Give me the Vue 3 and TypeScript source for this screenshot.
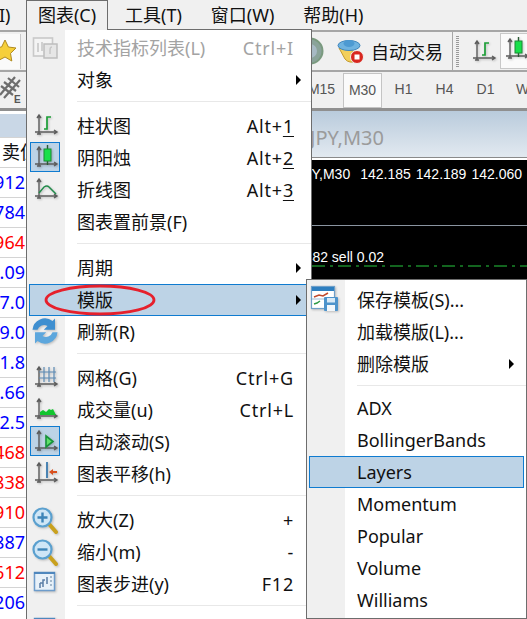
<script setup lang="ts">
interface MenuRow {
  label?: string
  key?: string
  under?: string
  icon?: string
  arrow?: boolean
  disabled?: boolean
  selected?: boolean
  active?: boolean
  sep?: boolean
}

const quotes = [
  { t: '1.912', c: 'b' }, { t: '1.784', c: 'b' }, { t: '1.964', c: 'r' }, { t: '1.09', c: 'b' },
  { t: '17.0', c: 'b' }, { t: '19.0', c: 'b' }, { t: '11.8', c: 'b' }, { t: '1.66', c: 'b' },
  { t: '12.5', c: 'b' }, { t: '1.468', c: 'r' }, { t: '1.838', c: 'r' }, { t: '1.910', c: 'r' },
  { t: '1.887', c: 'b' }, { t: '1.612', c: 'r' }, { t: '1.206', c: 'b' }
]

const mainMenu: MenuRow[] = [
  { label: '技术指标列表(L)', key: 'Ctrl+I', icon: 'ind', disabled: true },
  { label: '对象', arrow: true },
  { sep: true },
  { label: '柱状图', key: 'Alt+', under: '1', icon: 'bar' },
  { label: '阴阳烛', key: 'Alt+', under: '2', icon: 'candle', active: true },
  { label: '折线图', key: 'Alt+', under: '3', icon: 'line' },
  { label: '图表置前景(F)' },
  { sep: true },
  { label: '周期', arrow: true },
  { label: '模版', arrow: true, selected: true },
  { label: '刷新(R)', icon: 'refresh' },
  { sep: true },
  { label: '网格(G)', key: 'Ctrl+G', icon: 'grid' },
  { label: '成交量(u)', key: 'Ctrl+L', icon: 'vol' },
  { label: '自动滚动(S)', icon: 'auto', active: true },
  { label: '图表平移(h)', icon: 'shift' },
  { sep: true },
  { label: '放大(Z)', key: '+', icon: 'zin' },
  { label: '缩小(m)', key: '-', icon: 'zout' },
  { label: '图表步进(y)', key: 'F12', icon: 'step' },
  { sep: true },
  { label: '属性(P)...', key: 'F8', icon: 'step' }
]

const subMenu: MenuRow[] = [
  { label: '保存模板(S)...', icon: 'save' },
  { label: '加载模版(L)...' },
  { label: '删除模版', arrow: true },
  { sep: true },
  { label: 'ADX' },
  { label: 'BollingerBands' },
  { label: 'Layers', selected: true },
  { label: 'Momentum' },
  { label: 'Popular' },
  { label: 'Volume' },
  { label: 'Williams' }
]

const frames = ['M15', 'M30', 'H1', 'H4', 'D1', 'W1']
</script>

<template>
  <div class="app">
    <svg class="defs" width="0" height="0" aria-hidden="true">
      <defs>
        <g id="axes" fill="none" stroke="#5c5c5c" stroke-width="1.4">
          <path d="M9 6v18M5 22h21M7 8l2-3 2 3M7 24h4M24 20l3 2-3 2" />
        </g>
        <symbol id="i-bar" viewBox="0 0 30 30">
          <use href="#axes" />
          <path d="M14 19h3V7h4" fill="none" stroke="#1b9e36" stroke-width="1.700" />
        </symbol>
        <symbol id="i-candle" viewBox="0 0 30 30">
          <use href="#axes" />
          <path d="M17.500 3v20" stroke="#2b5a35" stroke-width="1.400" />
          <rect x="14" y="7" width="7" height="12" fill="#18e04a" stroke="#1a8a35" />
        </symbol>
        <symbol id="i-line" viewBox="0 0 30 30">
          <use href="#axes" />
          <path d="M9 19l5-6q3-2 5 0l7 7" fill="none" stroke="#218a4a" stroke-width="1.500" />
        </symbol>
        <symbol id="i-grid" viewBox="0 0 30 30">
          <use href="#axes" />
          <path d="M14 5v15M19 5v15M24 5v15M9 10h17M9 16h17" fill="none" stroke="#5c8ab4" stroke-width="1.200" />
        </symbol>
        <symbol id="i-vol" viewBox="0 0 30 30">
          <use href="#axes" />
          <path d="M10 21v-3l3-2 3 2 3-3 2 1 2-1 3 6z" fill="#12c52e" />
        </symbol>
        <symbol id="i-auto" viewBox="0 0 30 30">
          <use href="#axes" />
          <path d="M16 10l7 5.500-7 5.500z" fill="#5fe06a" stroke="#17933a" stroke-width="1.600" />
        </symbol>
        <symbol id="i-shift" viewBox="0 0 30 30">
          <use href="#axes" />
          <path d="M17 4v16" stroke="#3979ad" stroke-width="1.800" />
          <path d="M19 14l4-3v2h4v2h-4v2z" fill="#d9501e" />
        </symbol>
        <symbol id="i-zin" viewBox="0 0 30 30">
          <path d="M19 20l7 8" stroke="#c9a11e" stroke-width="4" stroke-linecap="round" />
          <circle cx="12.500" cy="13.500" r="9" fill="#cfe6f6" stroke="#5aa0cf" stroke-width="2.200" />
          <path d="M7.500 13.500h10M12.500 8.500v10" stroke="#3d84b8" stroke-width="2.400" />
        </symbol>
        <symbol id="i-zout" viewBox="0 0 30 30">
          <path d="M19 20l7 8" stroke="#c9a11e" stroke-width="4" stroke-linecap="round" />
          <circle cx="12.500" cy="13.500" r="9" fill="#cfe6f6" stroke="#5aa0cf" stroke-width="2.200" />
          <path d="M7.500 13.500h10" stroke="#3d84b8" stroke-width="2.400" />
        </symbol>
        <symbol id="i-step" viewBox="0 0 30 30">
          <rect x="4.500" y="4.500" width="20" height="18" fill="#e8f1f9" stroke="#6d9ccb" stroke-width="1.500" />
          <path d="M4 5h21" stroke="#4f87bd" stroke-width="2" />
          <path d="M10 20v-5M10 15h3M13 19v-7h2M17 16V9" fill="none" stroke="#5a7ea6" stroke-width="1.500" />
          <path d="M21 8v12" stroke="#8fa6bc" stroke-width="1.500" stroke-dasharray="2 2" />
        </symbol>
        <symbol id="i-refresh" viewBox="3 3 24 24">
          <path d="M5 14a10 10 0 0 1 16-7l2-2v9h-9l3-3a5.500 5.500 0 0 0-8 3z" fill="#3f8fd0" />
          <path d="M25 16a10 10 0 0 1-16 7l-2 2v-9h9l-3 3a5.500 5.500 0 0 0 8-3z" fill="#5da7dd" />
        </symbol>
        <symbol id="i-ind" viewBox="0 0 30 30">
          <rect x="3.500" y="6" width="19" height="18" fill="#f4f4f4" stroke="#c9c9c9" stroke-width="1.600" />
          <path d="M8 11v9M12 10v9" stroke="#c4c4c4" stroke-width="1.500" />
          <rect x="14" y="12" width="13" height="14" fill="#e6e6e6" stroke="#bdbdbd" stroke-width="1.500" />
          <path d="M22 15q-2 0-2 3v4" fill="none" stroke="#c8c8c8" stroke-width="1.500" />
        </symbol>
        <symbol id="i-save" viewBox="0 0 30 30">
          <rect x="1.500" y="2.500" width="23" height="22" fill="#fff" stroke="#6e9fc9" stroke-width="1.200" />
          <path d="M2 3h22v4H2z" fill="#2e7fc0" />
          <path d="M4 13l5-2 4 1 5-3" fill="none" stroke="#c0492d" stroke-width="1.500" />
          <path d="M4 20l3-1 3-2" fill="none" stroke="#2d9a45" stroke-width="1.500" />
          <path d="M2 15h12" stroke="#9ebcd6" />
          <rect x="14" y="13" width="14" height="14" rx="1" fill="#4d93cb" />
          <rect x="17" y="14" width="8" height="4.500" fill="#d8e9f6" />
          <rect x="17" y="21" width="8" height="6" fill="#f2f7fb" />
        </symbol>
      </defs>
    </svg>

    <div class="menubar">
      <span class="mb-clip">I)</span>
      <span class="mb-open">图表(C)</span>
      <span>工具(T)</span>
      <span class="mb-gap">窗口(W)</span>
      <span class="mb-gap">帮助(H)</span>
    </div>

    <div class="tools one">
      <div class="star-box">
        <svg class="star" viewBox="0 0 24 24">
          <path d="M12 1l3.400 7 7.600 1-5.500 5.400 1.300 7.600L12 18l-6.800 3.600 1.300-7.600L1 9l7.600-1z" fill="#f6cf3a" stroke="#b08a1e" stroke-width="1" />
        </svg>
      </div>
      <svg class="globe" viewBox="0 0 28 28">
        <circle cx="14" cy="14" r="12.500" fill="#8aa39a" stroke="#7a9a7f" stroke-width="2" />
        <circle cx="14" cy="14" r="7" fill="#a7b9c4" />
      </svg>
      <svg class="hat" viewBox="0 0 28 28">
        <path d="M2 11l19 4-1 9q-8 3-12-2z" fill="#f2cf5b" stroke="#c49a2c" />
        <ellipse cx="12" cy="8.500" rx="11" ry="5" fill="#6fb3e0" stroke="#3f86bd" />
        <ellipse cx="12" cy="6.500" rx="5.500" ry="3.500" fill="#4d9ad2" />
        <circle cx="20" cy="20" r="6.500" fill="#d8271f" stroke="#f0f0f0" />
        <rect x="17.500" y="17.500" width="5" height="5" fill="#fff" />
      </svg>
      <span class="auto">自动交易</span>
      <i class="vsep"></i>
      <i class="grip"></i>
      <svg class="tool-ic"><use href="#i-bar" /></svg>
      <div class="press"><svg class="tool-ic flush"><use href="#i-candle" /></svg></div>
    </div>

    <div class="tools two">
      <svg class="hatch" viewBox="0 0 21 28">
        <path d="M0 19L15 1M4 22L20 4M1 10l12 9M4 6l12 9M8 2l11 9" fill="none" stroke="#6e6e6e" stroke-width="2.200" />
        <text x="14" y="27" class="e">E</text>
      </svg>
      <div class="frames">
        <span v-for="f in frames" :key="f" class="frame" :class="{ on: f === 'M30', d1: f === 'D1' }">{{ f }}</span>
      </div>
    </div>

    <div class="main">
      <div class="list">
        <div class="list-head"></div>
        <div class="list-row title"><span>卖位价</span></div>
        <div v-for="q in quotes" :key="q.t" class="list-row" :class="q.c"><span class="num">{{ q.t }}</span></div>
      </div>
      <div class="chart">
        <div class="chart-title">USDJPY,M30</div>
        <div class="chart-body">
          <div class="ohlc">
            <span class="pair">USDJPY,M30</span>
            <span>142.185</span><span>142.189</span><span>142.060</span>
          </div>
          <div class="hline"></div>
          <div class="order">#40482 sell 0.02</div>
          <svg class="dash" height="2" width="100%"><line x1="0" y1="1" x2="100%" y2="1" stroke="#27c93f" stroke-dasharray="13 5 3 5" /></svg>
        </div>
      </div>
    </div>

    <div class="menu primary">
      <template v-for="(r, i) in mainMenu" :key="i">
        <div v-if="r.sep" class="sep"></div>
        <div v-else class="row" :class="{ dis: r.disabled, sel: r.selected }">
          <div class="ic" :class="{ active: r.active }">
            <svg v-if="r.icon" class="glyph" :class="{ faded: r.disabled }"><use :href="'#i-' + r.icon" /></svg>
          </div>
          <span class="lb">{{ r.label }}</span>
          <span class="key">{{ r.key }}<u v-if="r.under">{{ r.under }}</u></span>
          <span class="arrow-cell"><i v-if="r.arrow" class="arrow"></i></span>
        </div>
      </template>
      <svg class="ring" viewBox="0 0 112 32">
        <ellipse cx="56" cy="16" rx="54" ry="14" fill="none" stroke="#e6202c" stroke-width="2.800" />
      </svg>
    </div>

    <div class="menu sub">
      <template v-for="(r, i) in subMenu" :key="i">
        <div v-if="r.sep" class="sep short"></div>
        <div v-else class="row" :class="{ sel: r.selected }">
          <div class="ic">
            <svg v-if="r.icon" class="glyph"><use :href="'#i-' + r.icon" /></svg>
          </div>
          <span class="lb">{{ r.label }}</span>
          <span class="key"></span>
          <span class="arrow-cell"><i v-if="r.arrow" class="arrow"></i></span>
        </div>
      </template>
    </div>
  </div>
</template>

<style scoped>
.app {
  position: relative;
  width: 527px;
  height: 619px;
  overflow: hidden;
  background: #f0f0f0;
  color: #111;
  font-family: "Noto Sans", "Noto Sans CJK SC", sans-serif;
  font-size: 18px;
}
.defs { position: absolute; }
.menubar {
  display: flex;
  align-items: center;
  height: 30px;
  line-height: 28px;
  white-space: nowrap;
}
.menubar > span { flex: none; }
.mb-clip { width: 8px; margin-left: -1px; margin-right: 19px; }
.mb-open {
  position: relative;
  z-index: 3;
  box-sizing: border-box;
  align-self: flex-start;
  height: 30px;
  width: 82px;
  margin-right: 17px;
  text-align: center;
  background: #f0f0f0;
  border: 1px solid #6d6d6d;
  border-bottom: 0;
}
.mb-gap { margin-left: 29px; }
.tools {
  display: flex;
  align-items: center;
  height: 40px;
  box-sizing: border-box;
  border-top: 2px solid #a6a6a6;
  overflow: hidden;
}
.star-box {
  flex: none;
  box-sizing: border-box;
  width: 21px;
  height: 35px;
  display: flex;
  align-items: center;
  justify-content: flex-end;
  overflow: hidden;
  background: #fafafa;
  border-right: 1px solid #c8c8c8;
}
.star { flex: none; width: 24px; height: 24px; margin-right: 3px; }
.globe { flex: none; width: 28px; height: 28px; margin-left: 275px; }
.hat { flex: none; width: 28px; height: 28px; margin-left: 13px; }
.auto { flex: none; margin-left: 6px; white-space: nowrap; }
.vsep { flex: none; width: 1px; height: 38px; margin-left: 9px; background: #a6a6a6; }
.grip {
  flex: none;
  width: 3px;
  height: 32px;
  margin-left: 3px;
  background: repeating-linear-gradient(0deg, #9a9a9a 0 1px, #f0f0f0 1px 2px);
}
.tool-ic { flex: none; width: 30px; height: 30px; margin-left: 9px; filter: drop-shadow(1px 1px 1px rgba(0, 0, 0, .2)); }
.tool-ic.flush { margin-left: 0; }
.press {
  flex: none;
  box-sizing: border-box;
  width: 40px;
  height: 36px;
  margin-left: 2px;
  background: #fafafa;
  border: 1px solid #c8c8c8;
}
.two { height: 41px; border-bottom: 3px solid #8f8f8f; }
.hatch { flex: none; width: 21px; height: 28px; }
.e { font: bold 10px "Liberation Sans", sans-serif; fill: #555; }
.frames { display: flex; margin-left: 281px; flex: none; }
.frame {
  box-sizing: border-box;
  width: 39px;
  height: 35px;
  margin-right: 2px;
  text-align: center;
  line-height: 33px;
  font: 14px/33px "Liberation Sans", sans-serif;
  color: #555;
  flex: none;
}
.frame.on { background: #fafafa; border: 1px solid #c4c4c4; }
.frame.d1 { margin-left: 0; }
.main { display: flex; height: 508px; }
.list { flex: none; width: 26px; background: #fff; overflow: hidden; }
.list-head { height: 23px; margin-top: 3px; background: #c9d7e6; }
.list-row {
  box-sizing: border-box;
  display: flex;
  justify-content: flex-end;
  height: 30px;
  line-height: 28px;
  white-space: nowrap;
  border-top: 1px solid #d4d4d4;
  font-size: 18px;
}
.list-row.title { justify-content: flex-start; padding-left: 2px; }
.list-row.b { color: #0000ff; }
.list-row.r { color: #ff0000; }
.list-row .num { flex: none; margin-right: 1px; }
.chart { flex: 1; min-width: 0; }
.chart-title {
  box-sizing: border-box;
  height: 47px;
  padding: 6px 143px 0 0;
  text-align: right;
  font-size: 20px;
  line-height: 42px;
  color: #9b9b9b;
  background: linear-gradient(#b9cbdc, #e2e9f0);
  border-bottom: 1px solid #8a8a8a;
}
.chart-body {
  height: 125px;
  background: #000;
  color: #fff;
  border-top: 2px solid #fff;
  font: 14px/18px "Liberation Sans", sans-serif;
}
.ohlc { display: flex; justify-content: flex-end; gap: 5px; padding: 5px 5px 0 0; }
.pair { margin-right: 5px; }
.hline { height: 1px; margin-top: 42px; background: #8a94a0; }
.order { margin-top: 22px; padding-right: 143px; text-align: right; }
.dash { display: block; margin-top: -1px; }
.menu {
  position: absolute;
  box-sizing: border-box;
  border: 1px solid #6d6d6d;
  padding-bottom: 1px;
  z-index: 2;
  background: linear-gradient(90deg, #f0f0f0 38px, #fff 38px);
}
.primary { left: 26px; top: 29px; width: 286px; height: 600px; padding-top: 2px; }
.sub { left: 306px; top: 279px; width: 221px; height: 340px; padding-top: 4px; z-index: 4; }
.row {
  position: relative;
  box-sizing: border-box;
  display: grid;
  grid-template-columns: 48px 1fr auto 17px;
  height: 32px;
  margin: 0 0 0 2px;
  line-height: 32px;
}
.sub .row { margin-right: 2px; grid-template-columns: 48px 1fr auto 24px; }
.row.sel { background: #bdd3e6; box-shadow: inset 0 0 0 1px #0f7bd0; }
.row.dis { color: #a3a3a3; }
.ic { box-sizing: border-box; width: 30px; height: 30px; margin-left: 1px; }
.ic.active { background: #bdd3e6; box-shadow: inset 0 0 0 1px #0f7bd0; }
.glyph { display: block; width: 30px; height: 30px; filter: drop-shadow(1px 1px 1px rgba(0, 0, 0, .22)); }
.glyph.faded { filter: blur(.3px); }
.lb, .key { white-space: nowrap; }
.key { letter-spacing: .8px; }
.key u { text-underline-offset: 3px; }
.arrow-cell { display: flex; align-items: center; justify-content: flex-end; padding-right: 10px; }
.arrow { border-left: 5px solid #000; border-top: 5px solid transparent; border-bottom: 5px solid transparent; }
.sep { height: 14px; margin: 0 0 0 38px; position: relative; }
.sep::after { content: ""; position: absolute; left: 12px; right: 0; top: 5px; height: 1px; background: #e8e8e8; }
.sep.short { height: 12px; }
.ring { position: absolute; left: 17px; top: 254px; width: 112px; height: 32px; }
</style>

<style>
html, body { margin: 0; background: #f0f0f0; }
</style>
